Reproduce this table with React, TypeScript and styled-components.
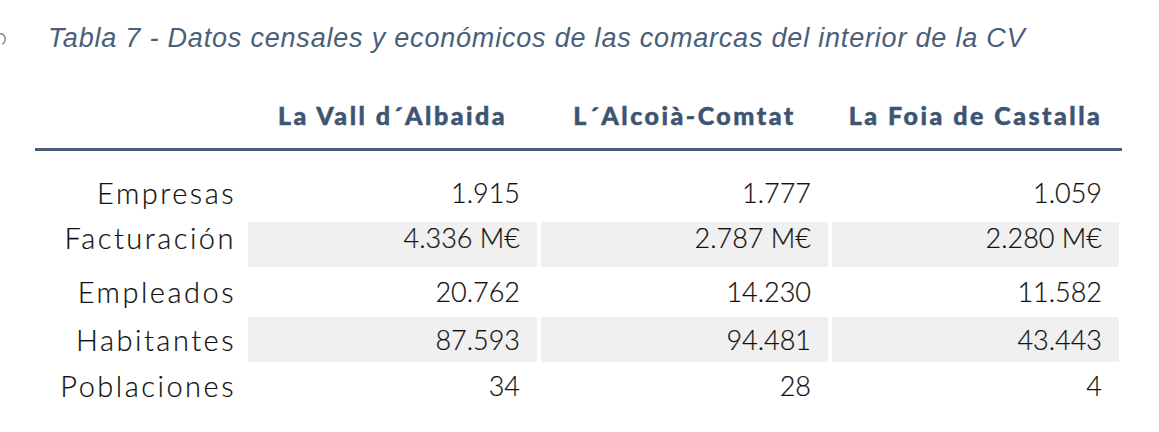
import { Fragment } from "react";
import styled, { createGlobalStyle } from "styled-components";

const GlobalStyle = createGlobalStyle`
  html, body {
    margin: 0;
    padding: 0;
    background: #ffffff;
  }
  body {
    width: 1159px;
    height: 432px;
    overflow: hidden;
  }
`;

type Row = { label: string; values: string[]; shaded?: boolean; lift?: number };

const columns = ["La Vall d´Albaida", "L´Alcoià-Comtat", "La Foia de Castalla"];

const rows: Row[] = [
  { label: "Empresas", values: ["1.915", "1.777", "1.059"], lift: 4 },
  { label: "Facturación", values: ["4.336 M€", "2.787 M€", "2.280 M€"], shaded: true, lift: 7 },
  { label: "Empleados", values: ["20.762", "14.230", "11.582"] },
  { label: "Habitantes", values: ["87.593", "94.481", "43.443"], shaded: true },
  { label: "Poblaciones", values: ["34", "28", "4"], lift: 1 },
];

const Page = styled.div`
  width: 1159px;
  height: 432px;
  display: flex;
  flex-direction: column;
  background: #ffffff;
`;

const CaptionRow = styled.div`
  display: flex;
  align-items: center;
  margin-top: 23px;
  height: 30px;
`;

/* fragment of a glyph cut by the left edge of the scan */
const EdgeMark = styled.svg`
  width: 6px;
  height: 30px;
  flex: none;
`;

const Caption = styled.h1`
  margin: 0 0 0 42px;
  font-family: "Liberation Sans", Arial, sans-serif;
  font-style: italic;
  font-weight: 400;
  font-size: 27px;
  letter-spacing: 0.8px;
  line-height: 30px;
  color: #4a607a;
  white-space: nowrap;
`;

const Table = styled.div`
  margin: 47px 0 0 35px;
  display: grid;
  grid-template-columns: 209px 289px 287px 287px;
  column-gap: 4px;
`;

const HeadCell = styled.div`
  height: 30px;
  padding-bottom: 18px;
  font-family: Lato, "Noto Sans", sans-serif;
  font-weight: 900;
  font-size: 25px;
  letter-spacing: 2.5px;
  line-height: 30px;
  color: #3e5572;
  -webkit-text-stroke: 0.5px #3e5572;
  text-align: center;
  white-space: nowrap;
`;

const Rule = styled.div`
  grid-column: 1 / -1;
  width: 1087px;
  height: 3px;
  background: #4a5d77;
  margin-bottom: 23px;
`;

const Body = styled.div`
  grid-column: 1 / -1;
  display: grid;
  grid-template-columns: subgrid;
  row-gap: 2.5px;
`;

const Cell = styled.div<{ $lift: number }>`
  height: 45px;
  font-family: Lato, "Noto Sans", sans-serif;
  font-weight: 300;
  line-height: 45px;
  color: #111111;
  text-align: right;
  white-space: nowrap;
  -webkit-text-stroke: 0.2px #111111;
  & > span {
    position: relative;
    top: ${(p) => -p.$lift}px;
  }
`;

const Label = styled(Cell)`
  padding-right: 8px;
  font-size: 29px;
  letter-spacing: 2.5px;
`;

const Value = styled(Cell)<{ $shaded: boolean }>`
  padding-right: 17px;
  font-size: 27px;
  background: ${(p) => (p.$shaded ? "#f0f0f0" : "transparent")};
`;

export default function App() {
  return (
    <>
      <GlobalStyle />
      <Page>
        <CaptionRow>
          <EdgeMark viewBox="0 0 6 30">
            <path d="M0 11 A4 5 0 0 1 2 21" fill="none" stroke="#7f8fa2" strokeWidth="1.6" />
          </EdgeMark>
          <Caption>Tabla 7 - Datos censales y económicos de las comarcas del interior de la CV</Caption>
        </CaptionRow>
        <Table>
          <HeadCell />
          {columns.map((c) => (
            <HeadCell key={c}>{c}</HeadCell>
          ))}
          <Rule />
          <Body>
            {rows.map((r) => (
              <Fragment key={r.label}>
                <Label $lift={r.lift ?? 0}>
                  <span>{r.label}</span>
                </Label>
                {r.values.map((v, i) => (
                  <Value key={i} $lift={r.lift ?? 0} $shaded={!!r.shaded}>
                    <span>{v}</span>
                  </Value>
                ))}
              </Fragment>
            ))}
          </Body>
        </Table>
      </Page>
    </>
  );
}
